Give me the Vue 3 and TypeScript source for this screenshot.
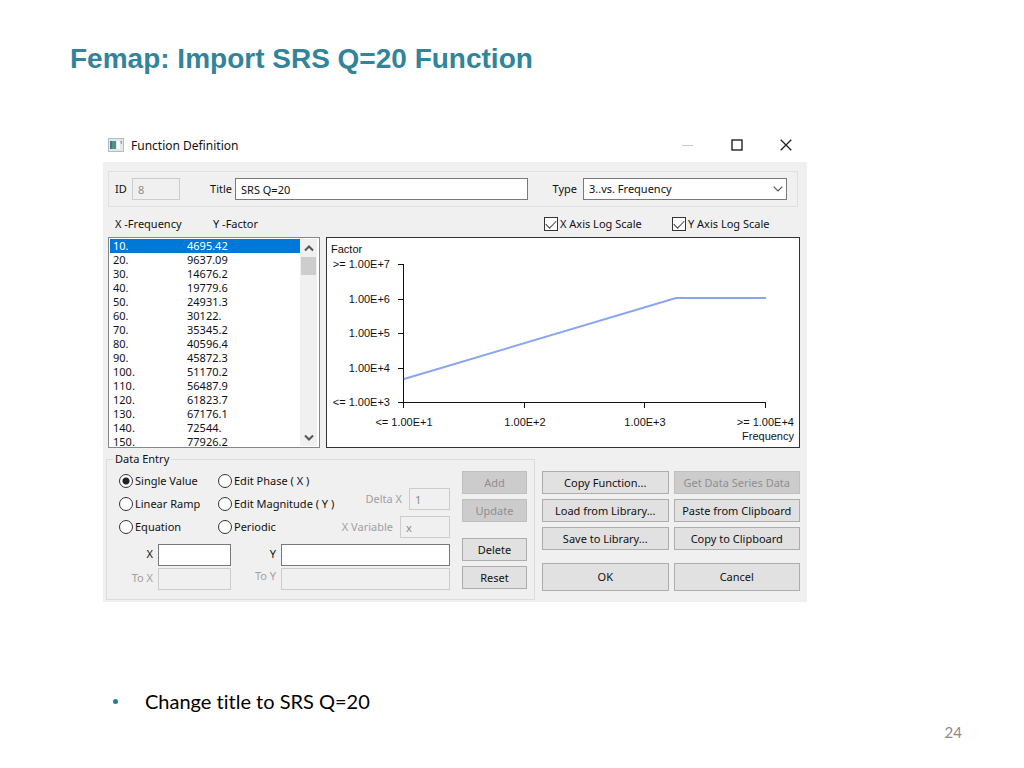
<script setup lang="ts">
import { ref } from 'vue'

interface Point { x: string; y: string }
interface Mode { id: string; label: string }
interface Tick { pos: number; label: string }

const points: Point[] = [
  { x: '10.', y: '4695.42' },
  { x: '20.', y: '9637.09' },
  { x: '30.', y: '14676.2' },
  { x: '40.', y: '19779.6' },
  { x: '50.', y: '24931.3' },
  { x: '60.', y: '30122.' },
  { x: '70.', y: '35345.2' },
  { x: '80.', y: '40596.4' },
  { x: '90.', y: '45872.3' },
  { x: '100.', y: '51170.2' },
  { x: '110.', y: '56487.9' },
  { x: '120.', y: '61823.7' },
  { x: '130.', y: '67176.1' },
  { x: '140.', y: '72544.' },
  { x: '150.', y: '77926.2' },
]

const modes: Mode[] = [
  { id: 'single', label: 'Single Value' },
  { id: 'phase', label: 'Edit Phase ( X )' },
  { id: 'ramp', label: 'Linear Ramp' },
  { id: 'magnitude', label: 'Edit Magnitude ( Y )' },
  { id: 'equation', label: 'Equation' },
  { id: 'periodic', label: 'Periodic' },
]

const yTicks: Tick[] = [
  { pos: 26, label: '>= 1.00E+7' },
  { pos: 61, label: '1.00E+6' },
  { pos: 95, label: '1.00E+5' },
  { pos: 130, label: '1.00E+4' },
  { pos: 164, label: '<= 1.00E+3' },
]

const xTicks: Tick[] = [
  { pos: 77, label: '<= 1.00E+1' },
  { pos: 198, label: '1.00E+2' },
  { pos: 318, label: '1.00E+3' },
  { pos: 439, label: '>= 1.00E+4' },
]

const selected = ref(0)
const mode = ref('single')
const title = ref('SRS Q=20')
const kind = ref('frequency')
const xLog = ref(true)
const yLog = ref(true)
const xValue = ref('')
const yValue = ref('')
</script>

<template>
  <main class="slide">
    <h1>Femap: Import SRS Q=20 Function</h1>

    <section class="dialog" aria-label="Function Definition">
      <header class="titlebar">
        <svg class="app-icon" width="16" height="14" viewBox="0 0 16 14" aria-hidden="true">
          <rect x="0.5" y="0.5" width="15" height="13" fill="#e3e8e9" stroke="#b3bcc0" />
          <rect x="2" y="3" width="6" height="8" fill="#4f9488" />
          <rect x="2" y="3" width="2" height="8" fill="#48708e" />
          <rect x="9" y="3" width="3" height="8" fill="#f8f8f8" />
          <path d="M12 3h2v3h-1z" fill="#9aa6ab" />
        </svg>
        <h2>Function Definition</h2>
        <div class="window-buttons">
          <button type="button" aria-label="Minimize" disabled>
            <svg width="12" height="12" viewBox="0 0 12 12"><path d="M0 6.5h11" stroke="#c8c8c8" fill="none" /></svg>
          </button>
          <button type="button" aria-label="Maximize">
            <svg width="12" height="12" viewBox="0 0 12 12"><rect x="1" y="1" width="10" height="10" stroke="#111" stroke-width="1.3" fill="none" /></svg>
          </button>
          <button type="button" aria-label="Close">
            <svg width="12" height="12" viewBox="0 0 12 12"><path d="M0.7 0.7l10.6 10.6M11.3 0.7L0.7 11.3" stroke="#222" stroke-width="1.3" fill="none" /></svg>
          </button>
        </div>
      </header>

      <div class="body">
        <div class="upper">
          <div class="identity">
            <label for="fn-id">ID</label>
            <input id="fn-id" type="text" value="8" disabled />
            <label class="lead" for="fn-title">Title</label>
            <input id="fn-title" v-model="title" type="text" />
            <label class="lead type-label" for="fn-type">Type</label>
            <div class="select-wrap">
              <select id="fn-type" v-model="kind">
                <option value="frequency">3..vs. Frequency</option>
              </select>
              <svg class="chevron" width="10" height="6" viewBox="0 0 10 6" aria-hidden="true"><path d="M0.7 0.7L5 5L9.3 0.7" fill="none" stroke="#555" stroke-width="1.2" /></svg>
            </div>
          </div>

          <div class="scales">
            <span class="col-x">X -Frequency</span>
            <span class="col-y">Y -Factor</span>
            <label class="check"><input v-model="xLog" type="checkbox" />X Axis Log Scale</label>
            <label class="check"><input v-model="yLog" type="checkbox" />Y Axis Log Scale</label>
          </div>

          <div class="data">
            <div class="list">
              <table aria-label="Function values">
                <tbody>
                  <tr v-for="(p, i) in points" :key="p.x" :class="{ active: i === selected }" @click="selected = i">
                    <td class="cell-x">{{ p.x }}</td>
                    <td>{{ p.y }}</td>
                  </tr>
                </tbody>
              </table>
              <div class="scrollbar">
                <button type="button" aria-label="Scroll up">
                  <svg width="10" height="7" viewBox="0 0 10 7"><path d="M1 5.5L5 1.5L9 5.5" fill="none" stroke="#555" stroke-width="2" /></svg>
                </button>
                <div class="thumb"></div>
                <button type="button" class="down" aria-label="Scroll down">
                  <svg width="10" height="7" viewBox="0 0 10 7"><path d="M1 1.5L5 5.5L9 1.5" fill="none" stroke="#555" stroke-width="2" /></svg>
                </button>
              </div>
            </div>

            <div class="chart">
              <svg viewBox="0 0 472 209" role="img" aria-label="Factor against Frequency">
                <text x="4" y="15">Factor</text>
                <g v-for="t in yTicks" :key="t.label">
                  <path class="axis" :d="`M71 ${t.pos + 0.5}h6`" />
                  <text x="63" :y="t.pos + 4" text-anchor="end">{{ t.label }}</text>
                </g>
                <g v-for="(t, i) in xTicks" :key="t.label">
                  <path class="axis" :d="`M${t.pos - 0.5} 164v6`" />
                  <text
                    :x="i === xTicks.length - 1 ? 467 : t.pos"
                    y="188"
                    :text-anchor="i === xTicks.length - 1 ? 'end' : 'middle'"
                  >{{ t.label }}</text>
                </g>
                <path class="axis" d="M76.5 26V164.5H439" />
                <path class="curve" d="M77 141L349 60H439" />
                <text x="467" y="202" text-anchor="end">Frequency</text>
              </svg>
            </div>
          </div>
        </div>

        <div class="lower">
          <fieldset>
            <legend>Data Entry</legend>
            <div class="entry">
              <div class="entry-main">
                <div class="options">
                  <div class="radios">
                    <label v-for="m in modes" :key="m.id" class="radio">
                      <input v-model="mode" type="radio" name="mode" :value="m.id" />{{ m.label }}
                    </label>
                  </div>
                  <div class="params">
                    <div class="param">
                      <label class="off" for="delta">Delta X</label>
                      <input id="delta" class="delta" type="text" value="1" disabled />
                    </div>
                    <div class="param">
                      <label class="off" for="variable">X Variable</label>
                      <input id="variable" class="variable" type="text" value="x" disabled />
                    </div>
                  </div>
                </div>
                <div class="values">
                  <label for="x-value">X</label>
                  <input id="x-value" v-model="xValue" type="text" />
                  <label for="y-value">Y</label>
                  <input id="y-value" v-model="yValue" type="text" />
                  <label class="off" for="to-x">To X</label>
                  <input id="to-x" type="text" disabled />
                  <label class="off raised" for="to-y">To Y</label>
                  <input id="to-y" type="text" disabled />
                </div>
              </div>
              <div class="entry-buttons">
                <button type="button" class="btn" disabled>Add</button>
                <button type="button" class="btn" disabled>Update</button>
                <button type="button" class="btn apart">Delete</button>
                <button type="button" class="btn">Reset</button>
              </div>
            </div>
          </fieldset>

          <div class="actions">
            <button type="button" class="btn">Copy Function...</button>
            <button type="button" class="btn" disabled>Get Data Series Data</button>
            <button type="button" class="btn">Load from Library...</button>
            <button type="button" class="btn">Paste from Clipboard</button>
            <button type="button" class="btn">Save to Library...</button>
            <button type="button" class="btn">Copy to Clipboard</button>
            <button type="button" class="btn final">OK</button>
            <button type="button" class="btn final">Cancel</button>
          </div>
        </div>
      </div>
    </section>

    <ul class="notes">
      <li>Change title to SRS Q=20</li>
    </ul>
    <footer>24</footer>
  </main>
</template>

<style>
body {
  margin: 0;
  background: #fff;
}
</style>

<style scoped>
* {
  box-sizing: border-box;
}

.slide {
  display: flex;
  flex-direction: column;
  min-height: 100vh;
  padding: 42px 62px 26px 70px;
  color: #000;
  font-family: Lato, sans-serif;
  font-variant-ligatures: none;
}

h1 {
  margin: 0;
  color: #31849b;
  font: bold 28px/34px 'Liberation Sans', Arial, sans-serif;
}

.dialog {
  margin: 54px 155px 0 33px;
  color: #111;
  font: 11px/14px 'Noto Sans', sans-serif;
}

.titlebar {
  display: flex;
  align-items: center;
  height: 32px;
  padding: 0 15px 0 5px;
}

.app-icon {
  margin-bottom: 2px;
}

h2 {
  flex: 1;
  margin: 0 0 0 7px;
  font: 12px/16px 'Noto Sans', sans-serif;
}

.window-buttons {
  display: flex;
  gap: 37px;
  margin-bottom: 2px;
}

.window-buttons button,
.scrollbar button {
  display: flex;
  align-items: center;
  justify-content: center;
  padding: 0;
  border: 0;
  background: none;
}

.body {
  padding: 9px 7px 2px 3px;
  background: #f0f0f0;
}

.upper {
  padding-left: 2px;
}

.identity {
  display: grid;
  grid-template-columns: 17px 48px 55px 1fr 55px 204px;
  align-items: center;
  height: 36px;
  margin-right: 2px;
  padding: 0 10px 0 6px;
  border: 1px solid #e0e0e0;
}

.lead {
  padding-right: 3px;
  text-align: right;
}

.type-label {
  padding-right: 6px;
}

input[type='text'],
select {
  width: 100%;
  min-width: 0;
  height: 22px;
  margin: 0;
  padding: 0 5px;
  border: 1px solid #7a7a7a;
  border-radius: 0;
  background: #fff;
  color: #111;
  font: inherit;
}

input[type='text']:disabled {
  border-color: #cccccc;
  background: #f0f0f0;
  color: #8c8c8c;
}

.select-wrap {
  position: relative;
}

select {
  display: block;
  appearance: none;
}

.chevron {
  position: absolute;
  top: 8px;
  right: 4px;
  pointer-events: none;
}

.scales {
  display: flex;
  align-items: center;
  height: 30px;
  padding: 4px 0 0 7px;
}

.col-x {
  width: 98px;
}

.col-y {
  flex: 1;
}

.check {
  display: flex;
  align-items: center;
  gap: 2px;
  width: 128px;
}

.check input {
  appearance: none;
  width: 14px;
  height: 14px;
  margin: 0;
  border: 1px solid #333;
  background: #fff;
}

.check input:checked::after {
  content: '';
  display: block;
  width: 9px;
  height: 5px;
  margin: 2px 0 0 1px;
  border: solid #444;
  border-width: 0 0 1px 1px;
  transform: rotate(-45deg);
}

.data {
  display: grid;
  grid-template-columns: 212px 1fr;
  gap: 6px;
}

.list {
  display: flex;
  height: 211px;
  padding: 1px 2px 1px 1px;
  overflow: hidden;
  border: 1px solid #828790;
  background: #fff;
}

table {
  flex: 1;
  height: 210px;
  border-collapse: collapse;
  line-height: 14px;
}

td {
  height: 14px;
  padding: 0;
}

.cell-x {
  width: 77px;
  padding-left: 3px;
}

.active {
  background: #0078d7;
  color: #fff;
}

.scrollbar {
  display: flex;
  flex-direction: column;
  width: 17px;
  background: #f0f0f0;
}

.scrollbar button {
  height: 18px;
}

.thumb {
  height: 18px;
  margin: 0 1px;
  background: #cdcdcd;
}

.scrollbar .down {
  margin-top: auto;
}

.chart {
  border: 1px solid #333;
  background: #fff;
}

.chart svg {
  display: block;
  width: 100%;
}

.chart text {
  fill: #111;
  font: 11px 'Liberation Sans', Arial, sans-serif;
}

.axis {
  fill: none;
  stroke: #111;
}

.curve {
  fill: none;
  stroke: #8aa4ef;
  stroke-width: 2;
}

.lower {
  display: grid;
  grid-template-columns: 429fr 258fr;
  gap: 7px;
}

fieldset {
  min-width: 0;
  margin: 4px 0 0;
  padding: 0 7px 9px 12px;
  border: 1px solid #dcdcdc;
}

legend {
  margin-left: -6px;
  padding: 0 2px;
}

.entry {
  display: flex;
  gap: 12px;
}

.entry-main {
  flex: 1;
}

.options {
  display: flex;
}

.radios {
  display: grid;
  flex: 1;
  grid-template-columns: 99px 1fr;
  grid-auto-rows: 23px;
  padding-top: 3px;
}

.radio {
  display: flex;
  align-items: center;
  gap: 2px;
  white-space: nowrap;
}

.radio input {
  appearance: none;
  flex: none;
  width: 14px;
  height: 14px;
  margin: 0;
  border: 1px solid #333;
  border-radius: 50%;
  background: #fff;
}

.radio input:checked {
  background: radial-gradient(circle, #222 0 3px, #fff 4px);
}

.params {
  display: flex;
  flex-direction: column;
  gap: 6px;
  padding-top: 22px;
}

.param {
  display: flex;
  align-items: center;
  justify-content: flex-end;
  gap: 7px;
  white-space: nowrap;
}

.param .delta {
  width: 41px;
}

.param .variable {
  width: 50px;
}

.off {
  color: #a0a0a0;
}

.values {
  display: grid;
  grid-template-columns: 39px 73px 50px 1fr;
  gap: 2px 0;
  align-items: center;
  margin-top: 6px;
}

.values label {
  padding: 0 5px 2px 0;
  text-align: right;
}

.values .raised {
  padding-bottom: 6px;
}

.entry-buttons {
  display: flex;
  flex-direction: column;
  gap: 5px;
  width: 65px;
  padding-top: 5px;
}

.btn {
  height: 23px;
  padding: 0;
  border: 1px solid #adadad;
  background: #e1e1e1;
  color: #111;
  font: inherit;
  white-space: nowrap;
}

.btn:disabled {
  border-color: #bfbfbf;
  background: #cccccc;
  color: #8f8f8f;
}

.apart {
  margin-top: 11px;
}

.actions {
  display: grid;
  grid-template-columns: 1fr 1fr;
  gap: 5px;
  align-content: start;
  padding-top: 23px;
}

.final {
  height: 28px;
  margin-top: 8px;
}

.notes {
  margin: 85px 0 0 43px;
  padding: 0;
  list-style: none;
  font-size: 20px;
  line-height: 28px;
}

.notes li {
  display: flex;
  align-items: center;
}

.notes li::before {
  content: '';
  width: 5px;
  height: 5px;
  margin-right: 27px;
  border-radius: 50%;
  background: #1f7f9f;
}

footer {
  margin-top: auto;
  color: #8a8a8a;
  font-size: 15px;
  line-height: 20px;
  text-align: right;
}
</style>
